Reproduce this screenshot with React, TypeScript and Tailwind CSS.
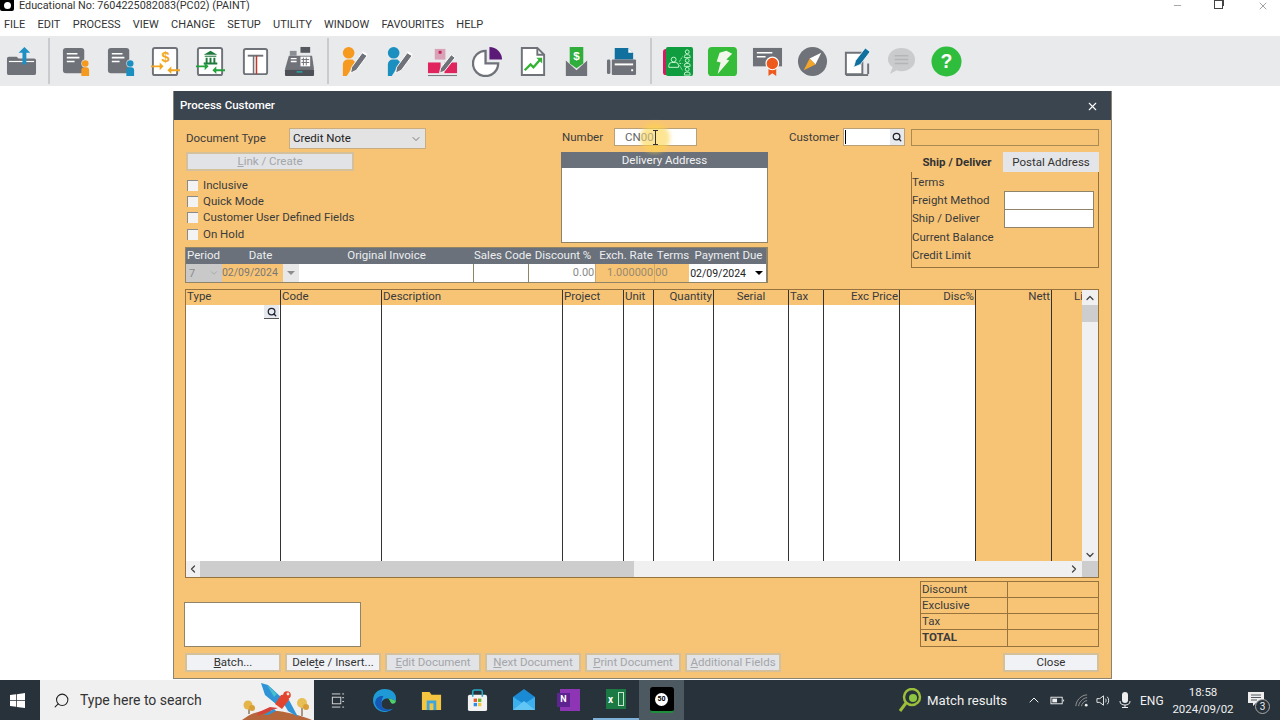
import React from 'react';
import { ChevronDown, ChevronLeft, ChevronRight, ChevronUp, Minus, Search, X } from 'lucide-react';

const MENU = ['FILE', 'EDIT', 'PROCESS', 'VIEW', 'CHANGE', 'SETUP', 'UTILITY', 'WINDOW', 'FAVOURITES', 'HELP'];

const STRIP = [
  { label: 'Period', w: 'w-[36px]' },
  { label: 'Date', w: 'w-[77px]' },
  { label: 'Original Invoice', w: 'w-[175px]' },
  { label: 'Sales Code', w: 'w-[56px]' },
  { label: 'Discount %', w: 'w-[66px]' },
  { label: 'Exch. Rate', w: 'w-[60px]' },
  { label: 'Terms', w: 'w-[34px]' },
  { label: 'Payment Due', w: 'w-[77px]' },
];

const COLUMNS = [
  { label: 'Type', w: 'w-[95px]', align: 'text-left' },
  { label: 'Code', w: 'w-[101px]', align: 'text-left' },
  { label: 'Description', w: 'w-[181px]', align: 'text-left' },
  { label: 'Project', w: 'w-[61px]', align: 'text-left' },
  { label: 'Unit', w: 'w-[30px]', align: 'text-left' },
  { label: 'Quantity', w: 'w-[60px]', align: 'text-right' },
  { label: 'Serial', w: 'w-[75px]', align: 'text-center' },
  { label: 'Tax', w: 'w-[35px]', align: 'text-left' },
  { label: 'Exc Price', w: 'w-[76px]', align: 'text-right' },
  { label: 'Disc%', w: 'w-[76px]', align: 'text-right' },
  { label: 'Nett', w: 'w-[76px]', align: 'text-right', orange: true },
  { label: 'Li', w: 'w-[32px]', align: 'text-right', orange: true, last: true },
];

const GREY = '#6f7379';

// toolbar icons
const Svg = ({ children }: { children: React.ReactNode }) => (
  <svg viewBox="0 0 32 32" className="w-[31px] h-[31px]">{children}</svg>
);

const DocPerson = ({ color }: { color: string }) => (
  <Svg>
    <rect x="2" y="2" width="22" height="26" rx="3" fill={GREY} />
    <path d="M6 8h11M6 12h13M6 16h8" stroke="#fff" strokeWidth="1.6" />
    <circle cx="25" cy="18" r="4" fill="#e9eaec" />
    <circle cx="25" cy="18" r="3.4" fill={color} />
    <path d="M21 31v-6a3 3 0 0 1 3-3h2a3 3 0 0 1 3 3v6z" fill={color} />
  </Svg>
);

const PersonPencil = ({ color }: { color: string }) => (
  <Svg>
    <circle cx="11" cy="7" r="6" fill={color} />
    <path d="M5 31V19a5 5 0 0 1 5-5h5l3 3-9 14z" fill={color} />
    <path d="M13 28l1-6 11-15 5 3-11 15z" fill={GREY} stroke="#fff" strokeWidth="1" />
    <path d="M25 6l5 3" stroke="#fff" strokeWidth="1.5" />
  </Svg>
);

const ToolbarIcon = ({ name }: { name: string }) => {
  switch (name) {
    case 'folder':
      return (
        <Svg>
          <path d="M1 13a2 2 0 0 1 2-2h8l2 2h16a2 2 0 0 1 2 2v13a2 2 0 0 1-2 2H3a2 2 0 0 1-2-2z" fill={GREY} />
          <path d="M3 16h26" stroke="#fff" strokeWidth="1.2" />
          <path d="M19 19V7h4l-6-6-6 6h4v12z" fill="#1d8fc4" transform="translate(2 0)" />
        </Svg>
      );
    case 'docOrange':
      return <DocPerson color="#f59a1e" />;
    case 'docBlue':
      return <DocPerson color="#1b8fc0" />;
    case 'dollar':
      return (
        <Svg>
          <rect x="3" y="2" width="25" height="28" rx="2" fill="#fff" stroke={GREY} strokeWidth="2" />
          <text x="16" y="17" textAnchor="middle" fontSize="15" fontWeight="700" fill="#f2a71e" fontFamily="Liberation Sans">$</text>
          <path d="M1 20h9v-3l4 4-4 4v-3H1zM31 24h-9v-3l-4 4 4 4v-3h9z" fill="#f2a71e" />
        </Svg>
      );
    case 'bank':
      return (
        <Svg>
          <rect x="3" y="2" width="25" height="28" rx="2" fill="#fff" stroke={GREY} strokeWidth="2" />
          <path d="M16 5l7 4H9zM10 10h12v1H10zM11 12h2v5h-2zM15 12h2v5h-2zM19 12h2v5h-2zM9 17h14v2H9z" fill="#1f7a3d" />
          <path d="M1 20h9v-3l4 4-4 4v-3H1zM31 24h-9v-3l-4 4 4 4v-3h9z" fill="#22a43a" />
        </Svg>
      );
    case 'tee':
      return (
        <Svg>
          <rect x="4" y="3" width="24" height="26" rx="2" fill="#fff" stroke={GREY} strokeWidth="2" />
          <path d="M8 10h16" stroke={GREY} strokeWidth="2" />
          <path d="M14 10v19" stroke={GREY} strokeWidth="1.6" />
          <path d="M17 10v19" stroke="#c0392b" strokeWidth="1.6" />
        </Svg>
      );
    case 'register':
      return (
        <Svg>
          <rect x="17" y="1" width="10" height="6" fill="#55595f" />
          <path d="M6 5h7v5H6z" fill="#8a8d92" />
          <path d="M5 10h24l2 14H1z" fill={GREY} />
          <rect x="17" y="11" width="10" height="10" fill="#fff" />
          <path d="M18 14h8M18 17h8M20 12v8M23 12v8" stroke={GREY} strokeWidth="1" />
          <path d="M7 13h6M7 16h6" stroke="#fff" strokeWidth="1.4" />
          <rect x="1" y="24" width="30" height="7" rx="1" fill="#4d5157" />
          <rect x="13" y="26" width="6" height="1.5" fill="#2aa0a8" />
        </Svg>
      );
    case 'personOrange':
      return <PersonPencil color="#f59a1e" />;
    case 'personBlue':
      return <PersonPencil color="#1b8fc0" />;
    case 'boxes':
      return (
        <Svg>
          <rect x="8" y="3" width="11" height="11" fill="#d9a2b6" />
          <rect x="12" y="5" width="3" height="3" fill="#c2255c" />
          <rect x="1" y="17" width="13" height="11" fill="#e0245e" />
          <rect x="18" y="17" width="13" height="11" fill="#e0245e" />
          <path d="M1 30.5h30" stroke={GREY} strokeWidth="1" />
          <path d="M13 28l1-5 11-14 4 3-11 14z" fill={GREY} stroke="#fff" strokeWidth="1" />
        </Svg>
      );
    case 'pie':
      return (
        <Svg>
          <path d="M14 5a13 13 0 1 0 13 13H14z" fill="#fff" stroke={GREY} strokeWidth="2.4" />
          <path d="M18 1a13 13 0 0 1 13 13H18z" fill="#5c1a78" />
        </Svg>
      );
    case 'chart':
      return (
        <Svg>
          <path d="M5 2h16l7 7v21H5z" fill="#fff" stroke={GREY} strokeWidth="2" />
          <path d="M21 2v7h7" fill="none" stroke={GREY} strokeWidth="2" />
          <path d="M8 25l6-6 3 3 7-8" fill="none" stroke="#34b233" strokeWidth="2.4" />
          <path d="M20 12h6v6z" fill="#34b233" />
        </Svg>
      );
    case 'envelope':
      return (
        <Svg>
          <path d="M9 1h14v17l-7 5-7-5z" fill="#2fae3c" />
          <text x="16" y="14" textAnchor="middle" fontSize="12" fontWeight="700" fill="#fff" fontFamily="Liberation Sans">$</text>
          <path d="M5 15l11 10 11-10v16H5z" fill={GREY} />
        </Svg>
      );
    case 'printer':
      return (
        <Svg>
          <path d="M9 2h14l5 5v7H9z" fill="#11709e" />
          <path d="M23 2l5 5h-5z" fill="#fff" />
          <rect x="1" y="14" width="3.5" height="15" rx="1.5" fill={GREY} />
          <rect x="6" y="14" width="25" height="16" rx="1" fill={GREY} />
          <rect x="9" y="18" width="19" height="2" fill="#fff" />
          <rect x="26" y="24" width="2" height="2" fill="#fff" />
        </Svg>
      );
    case 'book':
      return (
        <Svg>
          <rect x="0" y="3" width="8" height="27" rx="3" fill="#d81b60" />
          <rect x="3" y="1" width="28" height="30" rx="2" fill="#0f9d3f" />
          <g fill="none" stroke="#c8f5d0" strokeWidth="1">
            <circle cx="11" cy="14" r="2.5" />
            <path d="M6 22v-2a3 3 0 0 1 3-3h4a3 3 0 0 1 3 3v2z" />
            <circle cx="25" cy="6" r="2" />
            <path d="M22 12v-1a2 2 0 0 1 2-2h2a2 2 0 0 1 2 2v1z" />
            <circle cx="25" cy="15" r="2" />
            <path d="M22 21v-1a2 2 0 0 1 2-2h2a2 2 0 0 1 2 2v1z" />
            <circle cx="25" cy="24" r="2" />
            <path d="M22 30v-1a2 2 0 0 1 2-2h2a2 2 0 0 1 2 2v1z" />
            <path d="M17 16l3-5M17 18h3M17 20l3 5" strokeDasharray="1.5 1" />
          </g>
        </Svg>
      );
    case 'bolt':
      return (
        <Svg>
          <rect x="1" y="1" width="30" height="30" rx="4" fill="#35bd3a" />
          <path d="M20 5l6 3-6 6 3 1-12 14 3-12-4-1 3-9z" fill="#f1f7ea" />
        </Svg>
      );
    case 'certificate':
      return (
        <Svg>
          <rect x="1" y="2" width="30" height="19" fill={GREY} />
          <path d="M5 7h16M5 11h9" stroke="#fff" strokeWidth="1.6" />
          <path d="M17 22v9l4-3 4 3v-9z" fill="#ee5a1e" />
          <circle cx="21" cy="18" r="6.5" fill="#ee5a1e" stroke="#fff" strokeWidth="1.2" />
        </Svg>
      );
    case 'compass':
      return (
        <Svg>
          <circle cx="16" cy="16" r="15" fill={GREY} />
          <path d="M25 7l-6 12-6-6z" fill="#fff" />
          <path d="M7 25l6-12 6 6z" fill="#f4a62a" />
        </Svg>
      );
    case 'note':
      return (
        <Svg>
          <path d="M4 7h17v22h-17z M27 18v11" fill="#fff" stroke={GREY} strokeWidth="2" />
          <path d="M4 30h23" stroke={GREY} strokeWidth="2" />
          <path d="M12 22l2-7 10-13 5 4-10 13z" fill="#11709e" stroke="#fff" strokeWidth="0.8" />
        </Svg>
      );
    case 'bubble':
      return (
        <Svg>
          <path d="M16 2c8 0 14 5 14 12s-6 12-14 12c-2 0-3 0-5-1l-7 4 3-7c-3-2-5-5-5-8C2 7 8 2 16 2z" fill="#c9cbcd" />
          <path d="M9 10h14M9 14h14M9 18h14" stroke="#b3b5b8" strokeWidth="1.5" />
        </Svg>
      );
    default:
      return (
        <Svg>
          <circle cx="16" cy="16" r="15.5" fill="#2fbd3e" />
          <text x="16" y="23" textAnchor="middle" fontSize="20" fontWeight="700" fill="#fff" fontFamily="Liberation Sans">?</text>
        </Svg>
      );
  }
};

const ToolGroup = ({ names }: { names: string[] }) => (
  <div className="flex">
    {names.map((n) => (
      <div key={n} className="w-[44.7px] flex justify-center">
        <ToolbarIcon name={n} />
      </div>
    ))}
  </div>
);

const Divider = ({ className }: { className: string }) => (
  <div className={`w-[2px] h-[46px] bg-[#c9cbce] ${className}`} />
);

const Check = ({ label }: { label: string }) => (
  <div className="h-[16.4px] flex items-center ml-[2px]">
    <span className="w-[11px] h-[11px] bg-[#f3f3f3] border-t border-l border-[#8a8a8a] mr-[5px]" />
    <span>{label}</span>
  </div>
);

const FooterButton = ({ label, disabled, className = 'w-[96px]' }: { label: React.ReactNode; disabled?: boolean; className?: string }) => (
  <button
    type="button"
    className={`h-[19px] border-2 border-[#d4c09a] flex items-center justify-center leading-none ${className} ${
      disabled ? 'bg-[#e2e3e6] text-[#a3a6aa]' : 'bg-[#f0f2f5] text-[#333]'
    }`}
  >
    {label}
  </button>
);

const TotalRow = ({ label, bold }: { label: string; bold?: boolean }) => (
  <div className="flex h-[16px] border-b border-[#96733e] last:border-b-0 leading-[15px]">
    <div className={`w-[87px] pl-px border-r border-[#96733e] ${bold ? 'font-bold' : ''}`}>{label}</div>
  </div>
);

const DropArrow = ({ dark }: { dark?: boolean }) => (
  <span className={`w-0 h-0 border-l-[4px] border-r-[4px] border-t-[4px] border-l-transparent border-r-transparent ${dark ? 'border-t-black' : 'border-t-[#8d8d8d]'}`} />
);

export default function App() {
  return (
    <div className="w-[1280px] h-[720px] overflow-hidden flex flex-col bg-white font-['Roboto',sans-serif] text-[#3b3b3b] text-[11.5px]">
      {/* Title bar, sits right under the top of the screen */}
      <div className="h-[14px] flex items-start text-[10.8px] leading-[12px] text-[#333]">
        <span className="w-[14px] h-[11px] bg-black flex items-center justify-center rounded-b-[2px]">
          <span className="w-[7px] h-[7px] rounded-full bg-white" />
        </span>
        <span className="ml-[5px]">Educational No: 7604225082083(PC02) (PAINT)</span>
        <div className="ml-auto flex items-start text-[#444]">
          <Minus className="w-[11px] h-[11px] mr-[31px]" strokeWidth={1} />
          <span className="w-[9px] h-[9px] mr-[34px] border border-[#444] shadow-[2px_-2px_0_-1px_#444]" />
          <X className="w-[12px] h-[12px] mr-[11px]" strokeWidth={1} />
        </div>
      </div>

      {/* Menu */}
      <nav className="h-[22px] flex items-center pl-[4px] pt-px gap-[12.3px] text-[11px] text-[#333]">
        {MENU.map((m) => (
          <span key={m}>{m}</span>
        ))}
      </nav>

      {/* Toolbar */}
      <div className="h-[50px] bg-[#e9eaec] flex items-center">
        <div className="w-[42px] flex justify-center"><ToolbarIcon name="folder" /></div>
        <Divider className="ml-[6px] mr-[4px]" />
        <ToolGroup names={['docOrange', 'docBlue', 'dollar', 'bank', 'tee', 'register']} />
        <Divider className="ml-[5px] mr-[2px]" />
        <ToolGroup names={['personOrange', 'personBlue', 'boxes', 'pie', 'chart', 'envelope', 'printer']} />
        <Divider className="ml-[6px] mr-[4px]" />
        <ToolGroup names={['book', 'bolt', 'certificate', 'compass', 'note', 'bubble', 'help']} />
      </div>

      {/* Workspace */}
      <main className="flex-1 pl-[173px] pt-[5px]">
        <div className="w-[939px] h-[588px] flex flex-col border border-[#8b8371] border-t-0">
          <header className="h-[29px] shrink-0 bg-[#3b4550] text-white flex items-center justify-between pl-[6px] pr-[12px] pt-px font-medium text-[11.5px]">
            <span>Process Customer</span>
            <X className="w-[13px] h-[13px]" strokeWidth={2} />
          </header>

          <div className="flex-1 bg-[#f7c476] pl-[11px] pt-[8px] pr-[12px]">
            <div className="flex">
              <div className="w-[583px]">
                <div className="flex h-[115px]">
                  {/* Document options */}
                  <div className="w-[376px]">
                    <div className="flex items-center h-[21px]">
                      <span className="w-[104px] pl-px pt-px">Document Type</span>
                      <div className="w-[137px] h-[21px] bg-[#e3e3e3] border border-[#c9ad7e] flex items-center justify-between pl-[3px] pr-[3px] pt-px text-[#222]">
                        <span>Credit Note</span>
                        <ChevronDown className="w-[12px] h-[12px] text-[#555]" strokeWidth={1.5} />
                      </div>
                    </div>
                    <div className="mt-[3px] ml-px w-[168px] h-[19px] pt-px bg-[#e2e3e6] border-2 border-[#d4c09a] text-[#a3a6aa] flex items-center justify-center leading-none">
                      <span><u>L</u>ink / Create</span>
                    </div>
                    <div className="mt-[6px]">
                      <Check label="Inclusive" />
                      <Check label="Quick Mode" />
                      <Check label="Customer User Defined Fields" />
                      <Check label="On Hold" />
                    </div>
                  </div>

                  {/* Number and delivery address */}
                  <div className="w-[207px]">
                    <div className="flex items-center h-[18px]">
                      <span className="w-[53px] pl-px pt-px">Number</span>
                      <div className="relative w-[83px] h-[18px] bg-white border border-[#b9a078] pl-[10px] leading-[16px] text-[#666]">
                        <span className="absolute left-[25px] -top-[6px] w-[30px] h-[30px] rounded-full bg-[#fcd34d]/60 blur-[2px]" />
                        <span className="relative">CN<span className="text-[#b8a878]">00</span></span>
                        <svg viewBox="0 0 7 15" className="absolute left-[37px] top-[1px] w-[7px] h-[15px]" fill="none" stroke="#333">
                          <path d="M1 .5h5M3.5 .5v14M1 14.5h5" />
                        </svg>
                      </div>
                    </div>
                    <div className="mt-[6px] h-[16px] bg-[#6a717b] text-[#f2f2f2] text-center leading-[16px]">Delivery Address</div>
                    <div className="h-[75px] bg-white border border-[#8f8468] border-t-0" />
                  </div>
                </div>

                {/* Period strip */}
                <div className="mt-[4px] w-[583px] border border-[#8f8468] border-r-2">
                  <div className="flex h-[16px] bg-[#6a717b] text-[#eceef0] leading-[15px]">
                    {STRIP.map((s, i) => (
                      <div key={s.label} className={`${s.w} shrink-0 whitespace-nowrap ${i === 0 ? 'pl-px' : 'text-center'}`}>{s.label}</div>
                    ))}
                  </div>
                  <div className="flex h-[18px] leading-[17px] text-[11px]">
                    <div className="w-[36px] bg-[#c9c9c9] text-[#8b8b8b] flex items-center justify-between px-[3px]">
                      <span>7</span>
                      <ChevronDown className="w-[10px] h-[10px]" strokeWidth={1.2} />
                    </div>
                    <div className="w-[61px] text-[#777] text-[10.5px]">02/09/2024</div>
                    <div className="w-[16px] bg-[#e8e8e8] flex items-center justify-center"><DropArrow /></div>
                    <div className="w-[175px] bg-white border-r border-[#8f8468]" />
                    <div className="w-[56px] bg-white border-r border-[#8f8468]" />
                    <div className="w-[66px] bg-white text-right pr-px text-[#8a8a8a]">0.00</div>
                    <div className="w-[60px] text-right pr-px text-[#9a8a6c] border-x border-[#d2a860]">1.000000</div>
                    <div className="w-[34px] text-[#9a8a6c]">00</div>
                    <div className="w-[77px] bg-white text-[#222] text-[10.5px] pl-px flex items-center justify-between pr-[3px]">
                      <span>02/09/2024</span>
                      <DropArrow dark />
                    </div>
                  </div>
                </div>
              </div>

              {/* Customer panel */}
              <div className="ml-[21px] w-[310px]">
                <div className="flex items-center h-[18px]">
                  <span className="w-[54px] pt-px">Customer</span>
                  <div className="w-[62px] h-[18px] bg-white border border-[#b9a078] flex items-center justify-between">
                    <span className="w-px h-[14px] bg-black ml-px" />
                    <span className="h-full w-[14px] bg-[#e6e9ee] flex items-center justify-center">
                      <Search className="w-[10px] h-[10px] text-[#222]" strokeWidth={3} />
                    </span>
                  </div>
                  <div className="ml-[6px] flex-1 h-[17px] border border-[#a88a55]" />
                </div>
                <div className="mt-[6px] ml-[122px]">
                  <div className="flex h-[20px] pt-0">
                    <div className="w-[92px] pt-px flex items-center justify-center font-bold text-[#333]">Ship / Deliver</div>
                    <div className="w-[96px] pt-px bg-[#e3e5e8] flex items-center justify-center text-[#333]">Postal Address</div>
                  </div>
                  <div className="h-[96px] border border-[#96733e] border-t-0 pr-[4px] flex flex-col">
                    <div className="h-[19px] leading-[20px]">Terms</div>
                    <div className="h-[18.5px] flex items-center justify-between">
                      <span>Freight Method</span>
                      <span className="w-[90px] h-[19px] bg-white border border-[#8f8468]" />
                    </div>
                    <div className="h-[18.5px] flex items-center justify-between">
                      <span>Ship / Deliver</span>
                      <span className="w-[90px] h-[19px] bg-white border border-[#8f8468]" />
                    </div>
                    <div className="h-[18.5px] flex items-center">Current Balance</div>
                    <div className="h-[18.5px] flex items-center">Credit Limit</div>
                  </div>
                </div>
              </div>
            </div>

            {/* Lines grid */}
            <div className="mt-[6px] h-[289px] border border-[#96733e] flex flex-col">
              <div className="flex flex-1 min-h-0">
                <div className="flex-1 flex overflow-hidden">
                  {COLUMNS.map((c) => (
                    <div key={c.label} className={`${c.w} shrink-0 flex flex-col ${c.last ? '' : 'border-r border-[#333]'}`}>
                      <div className={`h-[15px] px-px leading-[13px] whitespace-nowrap ${c.align}`}>{c.label}</div>
                      <div className={`flex-1 ${c.orange ? '' : 'bg-white'} relative`}>
                        {c.label === 'Type' && (
                          <span className="absolute right-[1px] top-0 w-[15px] h-[14px] bg-[#e6e9ee] border-b border-[#555] flex items-center justify-center">
                            <Search className="w-[10px] h-[10px] text-[#223]" strokeWidth={3} />
                          </span>
                        )}
                      </div>
                    </div>
                  ))}
                </div>
                <div className="w-[16px] shrink-0 bg-[#f0f0f0] flex flex-col items-center">
                  <ChevronUp className="w-[12px] h-[12px] mt-[2px] text-[#444]" strokeWidth={2.5} />
                  <div className="w-full h-[17px] mt-[1px] bg-[#cdcdcd]" />
                  <ChevronDown className="w-[12px] h-[12px] mt-auto text-[#444]" strokeWidth={2.5} />
                </div>
              </div>
              <div className="h-[16px] shrink-0 bg-[#f0f0f0] flex items-center">
                <ChevronLeft className="w-[12px] h-[12px] ml-[1px] text-[#444]" strokeWidth={2.5} />
                <div className="w-[434px] h-full ml-[1px] bg-[#cdcdcd]" />
                <ChevronRight className="w-[12px] h-[12px] ml-auto mr-[2px] text-[#444]" strokeWidth={2.5} />
                <div className="w-[16px] h-full bg-[#cdcdcd]" />
              </div>
            </div>

            {/* Notes and totals */}
            <div className="mt-[3px] flex justify-between items-end">
              <div className="-ml-px w-[177px] h-[45px] bg-white border border-[#8f8468]" />
              <div className="w-[179px] border border-[#96733e]">
                <TotalRow label="Discount" />
                <TotalRow label="Exclusive" />
                <TotalRow label="Tax" />
                <TotalRow label="TOTAL" bold />
              </div>
            </div>

            {/* Buttons */}
            <div className="mt-[6px] flex justify-between">
              <div className="flex gap-[4px]">
                <FooterButton label={<span><u>B</u>atch...</span>} />
                <FooterButton label={<span>Dele<u>t</u>e / Insert...</span>} />
                <FooterButton disabled label={<span><u>E</u>dit Document</span>} />
                <FooterButton disabled label={<span><u>N</u>ext Document</span>} />
                <FooterButton disabled label={<span><u>P</u>rint Document</span>} />
                <FooterButton disabled label={<span><u>A</u>dditional Fields</span>} />
              </div>
              <FooterButton label="Close" />
            </div>
          </div>
        </div>
      </main>

      {/* Taskbar */}
      <footer className="h-[40px] shrink-0 bg-[#27323a] flex items-center text-[#f0f0f0]">
        <div className="w-[40px] flex justify-center ml-[-3px] mr-[3px]">
          <svg viewBox="0 0 16 16" className="w-[15px] h-[15px]" fill="#fff">
            <path d="M0 2.2l6.5-.9v6.3H0zM7.3 1.2L16 0v7.6H7.3zM0 8.4h6.5v6.3L0 13.8zM7.3 8.4H16V16l-8.7-1.2z" />
          </svg>
        </div>
        <div className="w-[274px] h-full bg-[#f0f0f0] flex items-center pl-[13px] text-[#333] text-[14px] relative overflow-hidden">
          <Search className="w-[17px] h-[17px] -scale-x-100 text-[#222]" strokeWidth={1.5} />
          <span className="ml-[10px] pt-px">Type here to search</span>
          <svg viewBox="0 0 74 40" className="absolute right-0 top-0 w-[74px] h-[40px]">
            <path d="M2 40c10-8 22-11 36-9s24 5 34 9z" fill="#b5663a" />
            <path d="M9 34v-8M62 36v-10" stroke="#7a5a3a" strokeWidth="1.2" />
            <circle cx="8" cy="25" r="4.5" fill="#e4b64a" />
            <circle cx="12" cy="28" r="3" fill="#d99f35" />
            <circle cx="62" cy="23" r="5" fill="#e8bf55" />
            <circle cx="66" cy="27" r="3" fill="#d99f35" />
            <path d="M21 3l7 2 14 13-6 6-11-9z" fill="#2f93d6" />
            <path d="M27 5l10 9-3 3z" fill="#46c0cf" />
            <path d="M44 24l5-4 9 17-10-6z" fill="#2f93d6" />
            <path d="M35 24l6-9 7-1 1 6-7 9z" fill="#e2452f" />
            <circle cx="47" cy="15" r="3.8" fill="#e2452f" />
            <circle cx="48" cy="14" r="1.4" fill="#f5e5d0" />
            <path d="M38 28l-8 3-13 5 2-4 11-5z" fill="#d8403a" />
            <path d="M34 29l-10 6 4 0 8-4z" fill="#2f93d6" />
          </svg>
        </div>
        <div className="w-[46px] flex justify-center text-[#ddd]">
          <svg viewBox="0 0 16 16" className="w-[15px] h-[15px]" fill="none" stroke="currentColor">
            <path d="M2 1h9M2 15h9M13 1h2M13 5h2M13 9h2M13 15h2" />
            <rect x="2.5" y="4.5" width="9" height="7" />
          </svg>
        </div>
        <div className="w-[47px] ml-[1px] flex justify-center">
          <svg viewBox="0 0 24 24" className="w-[25px] h-[25px]">
            <path d="M12 1C5 1 1 6 1 12c0 7 6 11 11 11 3 0 6-1 8-3-5 2-11 0-11-5 0-3 3-5 6-5 4 0 6 2 8 2 1-7-4-11-11-11z" fill="#1e9bd7" />
            <path d="M9 15c0 5 6 7 11 5-3 3-14 4-17-5 0-6 5-8 8-7-1 1-2 4-2 7z" fill="#1656b5" />
            <path d="M15 10c4 0 6 2 8 2 0 2-1 3-3 3-3 0-2-4-5-5z" fill="#4fd06b" />
          </svg>
        </div>
        <div className="w-[46px] flex justify-center">
          <svg viewBox="0 0 24 24" className="w-[23px] h-[23px]">
            <path d="M2 3h8l2 3h10v16H2z" fill="#f5c542" />
            <rect x="7" y="12" width="10" height="10" fill="#3ea6dd" />
            <rect x="10" y="15" width="4" height="7" fill="#f5c542" />
          </svg>
        </div>
        <div className="w-[46px] flex justify-center">
          <svg viewBox="0 0 24 24" className="w-[23px] h-[23px]">
            <rect x="2" y="6" width="20" height="17" rx="2" fill="#f2f2f2" />
            <path d="M7 8V3a2 2 0 0 1 2-2h6a2 2 0 0 1 2 2v5" fill="none" stroke="#27a9c9" strokeWidth="1.6" />
            <rect x="8" y="10" width="3.5" height="3.5" fill="#e85a2b" />
            <rect x="12.5" y="10" width="3.5" height="3.5" fill="#6cb52d" />
            <rect x="8" y="14.5" width="3.5" height="3.5" fill="#2b8be8" />
            <rect x="12.5" y="14.5" width="3.5" height="3.5" fill="#f5c542" />
          </svg>
        </div>
        <div className="w-[47px] flex justify-center">
          <svg viewBox="0 0 24 24" className="w-[24px] h-[24px]">
            <path d="M1 9l11-8 11 8v13H1z" fill="#1a8ad4" />
            <path d="M1 9l11 7 11-7v13H1z" fill="#3cb0ee" />
            <path d="M1 22l11-9 11 9z" fill="#62c6f5" />
          </svg>
        </div>
        <div className="w-[46px] flex justify-center">
          <span className="relative w-[20px] h-[22px] bg-[#8e35b5] flex items-center">
            <span className="w-[13px] h-[14px] bg-[#5d2390] text-white text-[9px] font-bold flex items-center justify-center -ml-[3px]">N</span>
          </span>
        </div>
        <div className="w-[46px] h-full flex items-center justify-center border-b-2 border-[#7fb0d8]">
          <span className="w-[20px] h-[20px] bg-[#1b7a43] text-white text-[10px] font-bold flex items-center justify-between pl-[2px] pr-[2px]">
            <span>x</span>
            <span className="w-[6px] h-[14px] border border-[#c8e6d0]" />
          </span>
        </div>
        <div className="w-[45px] h-full bg-[#4c5961] flex items-center justify-center">
          <span className="w-[24px] h-[26px] rounded-[3px] bg-black border-b-2 border-[#1f8f3c] flex items-center justify-center">
            <span className="w-[13px] h-[13px] rounded-full bg-white text-black text-[7px] font-bold flex items-center justify-center">50</span>
          </span>
        </div>

        <div className="ml-auto flex items-center pr-[8px]">
          <svg viewBox="0 0 24 24" className="w-[24px] h-[24px] mr-[5px]">
            <path d="M2 23l6-8" stroke="#9bbf3a" strokeWidth="3" />
            <ellipse cx="14" cy="9" rx="8" ry="8" fill="none" stroke="#9bbf3a" strokeWidth="2.5" />
            <circle cx="15" cy="10" r="4" fill="#8cc63f" />
          </svg>
          <span className="text-[13.2px] w-[99px] pt-px">Match results</span>
          <ChevronUp className="w-[16px] h-[16px] mr-[7.5px]" strokeWidth={1.5} />
          <svg viewBox="0 0 16 16" className="w-[15px] h-[15px] mr-[9px]" fill="none" stroke="#eee">
            <rect x="1" y="4.5" width="12" height="7" />
            <rect x="2.5" y="6" width="5" height="4" fill="#eee" stroke="none" />
            <path d="M14.5 7v2" />
          </svg>
          <svg viewBox="0 0 16 16" className="w-[15px] h-[15px] mr-[7px]" fill="none" stroke="#999">
            <path d="M2 14C2 8 8 2 14 2M5 14c0-4 5-9 9-9M8 14c0-2 3-6 6-6" />
            <circle cx="13" cy="13" r="1.5" fill="#eee" stroke="none" />
          </svg>
          <svg viewBox="0 0 16 16" className="w-[15px] h-[15px] mr-[6.5px]" fill="none" stroke="#eee">
            <path d="M1 6h3l4-3v10L4 10H1zM10 6c1 1 1 3 0 4M12 4c2 2 2 6 0 8" />
          </svg>
          <svg viewBox="0 0 16 16" className="w-[16px] h-[16px] mr-[7px]" fill="#eee">
            <rect x="5" y="0" width="6" height="11" rx="3" />
            <path d="M3 9c0 3 2 4 5 4s5-1 5-4M8 13v3M5 15.5h6" fill="none" stroke="#eee" />
          </svg>
          <span className="text-[12px] w-[26px] pt-px">ENG</span>
          <div className="w-[74px] pt-px text-center text-[11.5px] leading-[17px]">
            <div>18:58</div>
            <div>2024/09/02</div>
          </div>
          <div className="relative w-[32px] flex justify-center">
            <svg viewBox="0 0 16 16" className="w-[16px] h-[16px] -mt-[3px]" fill="#eee">
              <path d="M0 1h16v11H8l-3 3v-3H0z" />
              <path d="M3 4h10M3 6.5h10M3 9h6" stroke="#27323a" strokeWidth="0.8" />
            </svg>
            <span className="absolute left-[15px] top-[5px] w-[15px] h-[15px] rounded-full bg-[#27323a] border border-[#aaa] text-[10px] leading-[13px] text-center">3</span>
          </div>
        </div>
      </footer>
    </div>
  );
}
